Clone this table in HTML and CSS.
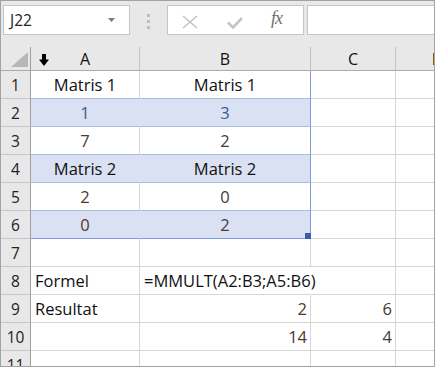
FILE: index.html
```html
<!DOCTYPE html>
<html>
<head>
<meta charset="utf-8">
<link rel="stylesheet" href="styles.css">
</head>
<body>
<div class="app">
  <div class="toolbar">
    <div class="namebox">
      <span class="name">J22</span>
      <svg class="dd" width="7" height="4" viewBox="0 0 7 4"><polygon points="0,0 7,0 3.5,4" fill="#7a7a7a"/></svg>
    </div>
    <div class="grip"><i></i><i></i><i></i></div>
    <div class="fbuttons">
      <svg class="ico-x" width="16" height="14" viewBox="0 0 16 14"><path d="M1 1 L15 13 M15 1 L1 13" stroke="#c4c4c4" stroke-width="1.6" fill="none"/></svg>
      <svg class="ico-check" width="16" height="12" viewBox="0 0 16 12"><path d="M1 5.5 L6 10.5 L15 1" stroke="#c4c4c4" stroke-width="2.6" fill="none"/></svg>
      <span class="fx">fx</span>
    </div>
    <div class="finput"></div>
  </div>
  <div class="sheet">
    <div class="c corner"><svg width="17" height="15" viewBox="0 0 17 15"><polygon points="17,0 17,15 0,15" fill="#b7b7b7"/></svg></div>
    <div class="c ch chA"><svg class="cursor" width="10" height="12" viewBox="0 0 10 12"><rect x="3" y="0" width="4" height="6" fill="#000"/><polygon points="0,5.5 10,5.5 5,12" fill="#000"/></svg>A</div>
    <div class="c ch">B</div>
    <div class="c ch">C</div>
    <div class="c ch chD">D</div>

    <div class="c rh">1</div>
    <div class="c ctr sA">Matris 1</div>
    <div class="c ctr sB">Matris 1</div>
    <div class="c"></div>
    <div class="c"></div>

    <div class="c rh">2</div>
    <div class="c ctr num blue sA shade">1</div>
    <div class="c ctr num blue sB shade">3</div>
    <div class="c"></div>
    <div class="c"></div>

    <div class="c rh">3</div>
    <div class="c ctr num sA">7</div>
    <div class="c ctr num sB">2</div>
    <div class="c"></div>
    <div class="c"></div>

    <div class="c rh">4</div>
    <div class="c ctr sA shade">Matris 2</div>
    <div class="c ctr sB shade">Matris 2</div>
    <div class="c"></div>
    <div class="c"></div>

    <div class="c rh">5</div>
    <div class="c ctr num sA">2</div>
    <div class="c ctr num sB">0</div>
    <div class="c"></div>
    <div class="c"></div>

    <div class="c rh">6</div>
    <div class="c ctr num sA shade last">0</div>
    <div class="c ctr num sB shade last">2<span class="handle"></span></div>
    <div class="c"></div>
    <div class="c"></div>

    <div class="c rh">7</div>
    <div class="c"></div>
    <div class="c"></div>
    <div class="c"></div>
    <div class="c"></div>

    <div class="c rh">8</div>
    <div class="c l">Formel</div>
    <div class="c l over">=MMULT(A2:B3;A5:B6)</div>
    <div class="c"></div>
    <div class="c"></div>

    <div class="c rh">9</div>
    <div class="c l">Resultat</div>
    <div class="c r num">2</div>
    <div class="c r num">6</div>
    <div class="c"></div>

    <div class="c rh">10</div>
    <div class="c"></div>
    <div class="c r num">14</div>
    <div class="c r num">4</div>
    <div class="c"></div>

    <div class="c rh">11</div>
    <div class="c"></div>
    <div class="c"></div>
    <div class="c"></div>
    <div class="c"></div>
  </div>
</div>
</body>
</html>
```
FILE: styles.css
```css
html, body {
  margin: 0;
  padding: 0;
  background: #fff;
}
.app {
  width: 435px;
  height: 367px;
  box-sizing: border-box;
  border: 1px solid #a3a3a3;
  overflow: hidden;
  background: #fff;
  font-family: "Open Sans", "Noto Sans", sans-serif;
}
.toolbar {
  height: 46px;
  box-sizing: border-box;
  padding: 4px 0 0 2px;
  background: #e8e8e8;
  display: flex;
  align-items: flex-start;
  overflow: hidden;
}
.namebox {
  flex: none;
  width: 127px;
  height: 30px;
  box-sizing: border-box;
  border: 1px solid #c6c6c6;
  background: #fff;
  display: flex;
  align-items: center;
  padding: 0 14px 0 6px;
  justify-content: space-between;
}
.name {
  font-size: 15.5px;
  color: #222;
}
.grip {
  flex: none;
  margin: 9px 17px 0 17px;
  width: 3px;
  display: flex;
  flex-direction: column;
  gap: 3px;
}
.grip i {
  display: block;
  width: 3px;
  height: 3px;
  background: #bdbdbd;
}
.fbuttons {
  flex: none;
  width: 137px;
  height: 30px;
  box-sizing: border-box;
  border: 1px solid #c6c6c6;
  background: #fff;
  position: relative;
}
.ico-x {
  position: absolute;
  left: 14px;
  top: 9px;
}
.ico-check {
  position: absolute;
  left: 59px;
  top: 11px;
}
.fx {
  position: absolute;
  left: 103px;
  top: 2px;
  font-family: "Liberation Serif", "DejaVu Serif", serif;
  font-style: italic;
  font-size: 18px;
  color: #6f6f6f;
  letter-spacing: -1px;
}
.finput {
  flex: none;
  margin-left: 3px;
  width: 200px;
  height: 30px;
  box-sizing: border-box;
  border: 1px solid #c6c6c6;
  background: #fff;
}
.sheet {
  display: grid;
  grid-template-columns: 30px 109px 171px 85px 82px;
  grid-template-rows: 24px;
  grid-auto-rows: 28px;
  width: 477px;
}
.c {
  box-sizing: border-box;
  border-right: 1px solid #d6d6d6;
  border-bottom: 1px solid #d6d6d6;
  display: flex;
  align-items: center;
  font-size: 16.5px;
  color: #111;
  white-space: nowrap;
  position: relative;
}
.corner, .ch {
  background: #e8e8e8;
  border-bottom: 1px solid #ababab;
  border-right: 1px solid #c2c2c2;
}
.corner {
  justify-content: flex-end;
  align-items: flex-end;
  padding: 0 2px 3px 0;
  border-right-color: #9f9f9f;
}
.ch {
  justify-content: center;
  font-size: 16px;
  color: #111;
}
.chD {
  padding-left: 2px;
}
.cursor {
  position: absolute;
  left: 8px;
  top: 7px;
}
.rh {
  background: #e8e8e8;
  border-right: 1px solid #9f9f9f;
  border-bottom: 1px solid #c6c6c6;
  justify-content: center;
  font-size: 15.5px;
  color: #222;
}
.ctr {
  justify-content: center;
}
.l {
  padding-left: 4px;
}
.r {
  justify-content: flex-end;
  padding-right: 3px;
}
.num {
  color: #4a3a30;
}
.num.blue {
  color: #3a5a9a;
}
.sA, .sB {
  border-bottom-color: #a6bce6;
}
.sB {
  border-right-color: #7f9dd8;
}
.shade {
  background: #dae1f2;
}
.sA.shade {
  border-right-color: #dae1f2;
}
.last {
  border-bottom-color: #7f9dd8;
}
.over {
  border-right-color: #fff;
  z-index: 1;
}
.handle {
  position: absolute;
  right: -1px;
  bottom: -1px;
  width: 6px;
  height: 6px;
  background: #3c5cae;
}
```
